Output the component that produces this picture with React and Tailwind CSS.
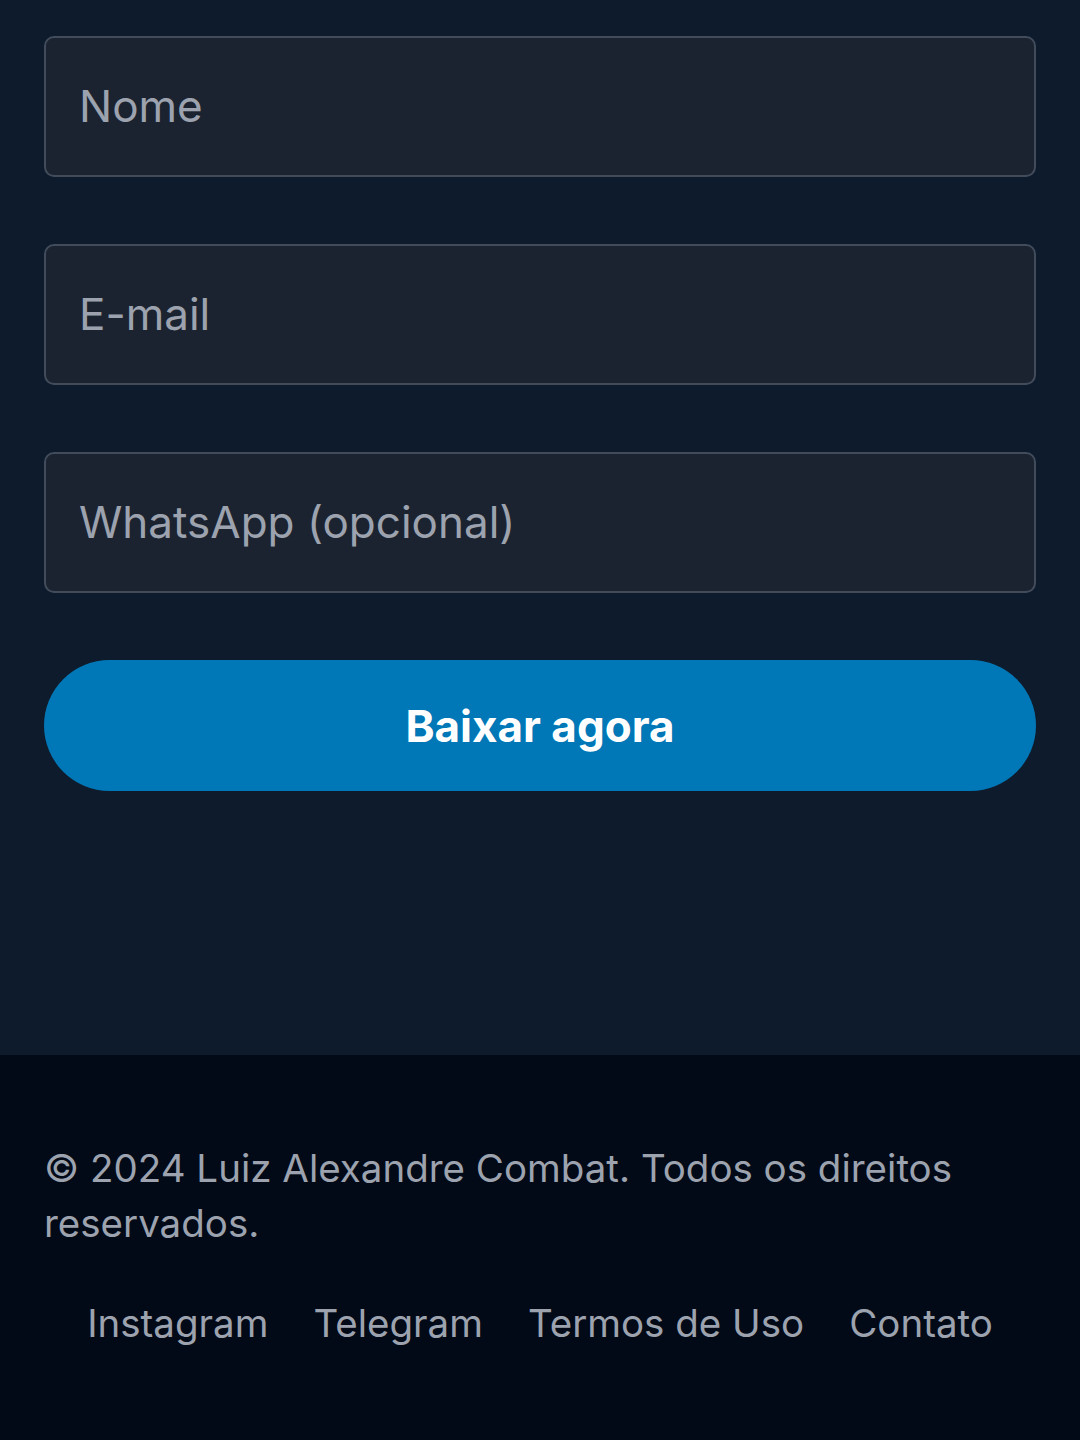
export default function App() {
  const inputCls =
    "block w-full h-[141px] rounded-[10px] border-2 border-[#424b5a] bg-[#1c2330] px-[33px] pb-[2px] text-[44px] text-[#e5e7eb] placeholder:text-[#9ca3af] outline-none";
  return (
    <div className="min-h-[1440px] w-[1080px] flex flex-col bg-[#030a17]" style={{ fontFamily: "Inter, 'Noto Sans', sans-serif" }}>
      <section className="bg-[#0d1b2c] px-[44px] pt-[36px] pb-[264px]">
        <form className="flex flex-col gap-[67px]" onSubmit={(e) => e.preventDefault()}>
          <input className={inputCls} placeholder="Nome" />
          <input className={inputCls} placeholder="E-mail" />
          <input className={inputCls} placeholder="WhatsApp (opcional)" />
          <button className="h-[131px] w-full rounded-full bg-[#0077b6] text-[44px] font-bold text-white">
            Baixar agora
          </button>
        </form>
      </section>
      <footer className="flex-1 bg-[#030a17] px-[44px] pt-[86px] pb-[90px]">
        <p className="text-[38.5px] leading-[55px] text-[#9ca3af]">
          © 2024 Luiz Alexandre Combat. Todos os direitos reservados.
        </p>
        <div className="mt-[45px] flex justify-center gap-[45px] text-[38.5px] leading-[55px] text-[#9ca3af]">
          <a href="#">Instagram</a>
          <a href="#">Telegram</a>
          <a href="#">Termos de Uso</a>
          <a href="#">Contato</a>
        </div>
      </footer>
    </div>
  );
}
